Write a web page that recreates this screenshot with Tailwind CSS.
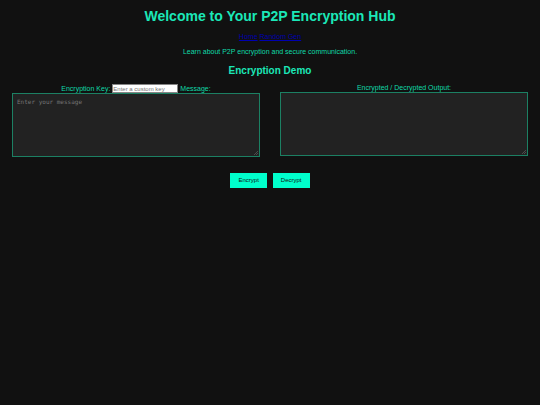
<!DOCTYPE html>
<html lang="en">
<head>
<meta charset="utf-8">
<title>P2P Encryption Hub</title>
<script src="https://cdn.jsdelivr.net/npm/@tailwindcss/browser@4"></script>
</head>
<body class="min-h-screen bg-[#111111] px-3 pt-2 text-center font-['Liberation_Sans',Arial,sans-serif] text-[7px] leading-[8px] text-[#10d9a8]">
<header>
<h1 class="text-[14px] leading-[17px] font-bold text-[#1be8b8]">Welcome to Your P2P Encryption Hub</h1>
<nav class="mt-2 text-[#0000b0]"><a href="#" class="underline">Home</a> <a href="#" class="underline">Random Gen</a></nav>
<p class="mt-[7px]">Learn about P2P encryption and secure communication.</p>
</header>
<main>
<h2 class="mt-2 text-[10px] leading-[13px] font-bold text-[#1be8b8]">Encryption Demo</h2>
<div class="mt-[7px] flex gap-5">
<section class="flex-1">
<div class="flex items-center justify-center gap-0.5">
<label for="key">Encryption Key:</label>
<input id="key" type="text" placeholder="Enter a custom key" class="h-[9px] w-[66px] border border-[#858585] bg-white text-[6px] leading-[7px] text-black placeholder:text-[#757575]">
<label for="message">Message:</label>
</div>
<div class="relative">
<textarea id="message" placeholder="Enter your message" class="block h-16 w-full resize-none border border-[#1c8063] bg-[#222222] p-1 font-['DejaVu_Sans_Mono',monospace] text-[6px] leading-[7px] text-[#00ffcc] placeholder:text-[#757575]"></textarea>
<svg class="pointer-events-none absolute right-0.5 bottom-0.5 size-1" viewBox="0 0 4 4" fill="none" stroke="#777777" stroke-width=".5"><path d="M0 4 4 0M2 4 4 2"/></svg>
</div>
</section>
<section class="flex-1">
<label for="output" class="block">Encrypted / Decrypted Output:</label>
<div class="relative">
<textarea id="output" readonly class="block h-16 w-full resize-none border border-[#1c8063] bg-[#222222] p-1 font-['DejaVu_Sans_Mono',monospace] text-[6px] leading-[7px] text-[#00ffcc]"></textarea>
<svg class="pointer-events-none absolute right-0.5 bottom-0.5 size-1" viewBox="0 0 4 4" fill="none" stroke="#777777" stroke-width=".5"><path d="M0 4 4 0M2 4 4 2"/></svg>
</div>
</section>
</div>
<div class="mt-4 flex justify-center gap-1.5 text-[6px] leading-[7px] text-[#111111]">
<button type="button" class="bg-[#00ffcc] px-2 py-1">Encrypt</button>
<button type="button" class="bg-[#00ffcc] px-2 py-1">Decrypt</button>
</div>
</main>
</body>
</html>
